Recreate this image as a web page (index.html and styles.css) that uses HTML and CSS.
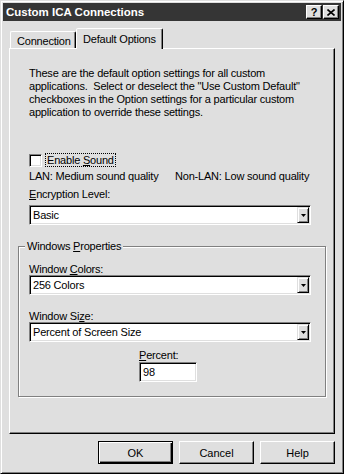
FILE: index.html
```html
<!DOCTYPE html>
<html lang="en">
<head>
    <meta charset="UTF-8">
    <title>Custom ICA Connections</title>
    <link rel="stylesheet" href="styles.css">
</head>
<body>
    <div class="window">
        <div class="titlebar">
            <span class="title">Custom ICA Connections</span>
            <div class="caption-buttons">
                <button class="caption-btn">?</button>
                <button class="caption-btn">
                    <svg width="8" height="7" viewBox="0 0 8 7"><path d="M0.5 0.5 L7.5 6.5 M7.5 0.5 L0.5 6.5" stroke="#000" stroke-width="1.6" fill="none"/></svg>
                </button>
            </div>
        </div>

        <div class="tabs">
            <div class="tab">Connection</div>
            <div class="tab active">Default Options</div>
        </div>

        <div class="panel">
            <div class="section">
                <p class="intro">These are the default option settings for all custom<br>applications.&nbsp; Select or deselect the "Use Custom Default"<br>checkboxes in the Option settings for a particular custom<br>application to override these settings.</p>

                <div class="check-row">
                    <span class="checkbox"></span>
                    <span class="focus-label">Enable <u>S</u>ound</span>
                </div>

                <div class="quality-row">
                    <span>LAN: Medium sound quality</span>
                    <span>Non-LAN: Low sound quality</span>
                </div>

                <div class="field-label enc-label"><u>E</u>ncryption Level:</div>
                <div class="combo">
                    <span class="combo-text">Basic</span>
                    <span class="combo-arrow"><svg width="5" height="3" viewBox="0 0 5 3"><path d="M0 0 H5 L2.5 3 Z" fill="#000"/></svg></span>
                </div>
            </div>

            <fieldset class="group">
                <legend>Windows <u>P</u>roperties</legend>

                <div class="field-label">Window <u>C</u>olors:</div>
                <div class="combo">
                    <span class="combo-text">256 Colors</span>
                    <span class="combo-arrow"><svg width="5" height="3" viewBox="0 0 5 3"><path d="M0 0 H5 L2.5 3 Z" fill="#000"/></svg></span>
                </div>

                <div class="field-label size-label">Window Si<u>z</u>e:</div>
                <div class="combo">
                    <span class="combo-text">Percent of Screen Size</span>
                    <span class="combo-arrow"><svg width="5" height="3" viewBox="0 0 5 3"><path d="M0 0 H5 L2.5 3 Z" fill="#000"/></svg></span>
                </div>

                <div class="percent">
                    <div class="field-label"><u>P</u>ercent:</div>
                    <div class="text-box">98</div>
                </div>
            </fieldset>
        </div>

        <div class="dialog-buttons">
            <button class="btn default">OK</button>
            <button class="btn">Cancel</button>
            <button class="btn">Help</button>
        </div>
    </div>
</body>
</html>
```

FILE: styles.css
```css
* {
    box-sizing: border-box;
}

body {
    margin: 0;
    background: #dfdfdf;
    font-family: "Liberation Sans", Arial, sans-serif;
    font-size: 11px;
    line-height: 13px;
    letter-spacing: -0.2px;
    color: #000;
}

.window {
    width: 344px;
    height: 474px;
    padding: 2px;
    border: 1px solid;
    border-color: #dfdfdf #000 #000 #dfdfdf;
    box-shadow: inset 1px 1px #fff, inset -1px -1px #808080;
    display: flex;
    flex-direction: column;
}

/* title bar */
.titlebar {
    height: 18px;
    background: #353535;
    display: flex;
    align-items: center;
    justify-content: space-between;
    padding: 0 2px 0 3px;
}

.title {
    color: #fff;
    font-weight: bold;
    font-size: 11.5px;
    letter-spacing: 0;
}

.caption-buttons {
    display: flex;
    gap: 1px;
}

.caption-btn {
    width: 16px;
    height: 14px;
    padding: 0;
    background: #dfdfdf;
    border: 1px solid;
    border-color: #fff #000 #000 #fff;
    box-shadow: inset -1px -1px #808080;
    font: bold 11px/12px "Liberation Sans", Arial, sans-serif;
    display: flex;
    align-items: center;
    justify-content: center;
}

/* tabs */
.tabs {
    display: flex;
    align-items: flex-end;
    height: 20px;
    margin: 7px 0 0 7px;
}

.tab {
    height: 17px;
    width: 66px;
    padding: 3px 0 0 6px;
    border: 1px solid;
    border-bottom: none;
    border-color: #fff #000 transparent #fff;
    box-shadow: inset -1px 0 #808080;
    border-radius: 2px 2px 0 0;
}

.tab.active {
    width: 87px;
    height: 21px;
    padding-top: 4px;
    margin-bottom: -1px;
    background: #dfdfdf;
    position: relative;
    z-index: 1;
}

/* page */
.panel {
    height: 386px;
    margin: 0 6px;
    padding: 18px 8px 0;
    border: 1px solid;
    border-color: #fff #000 #000 #fff;
    box-shadow: inset -1px -1px #808080;
}

.section {
    padding: 0 15px 0 11px;
}

.intro {
    margin: 0;
    white-space: nowrap;
}

.check-row {
    margin-top: 34px;
    height: 14px;
    display: flex;
    align-items: center;
}

.checkbox {
    width: 13px;
    height: 13px;
    background: #fff;
    border: 1px solid;
    border-color: #808080 #fff #fff #808080;
    box-shadow: inset 1px 1px #000, inset -1px -1px #dfdfdf;
}

.focus-label {
    margin-left: 3px;
    padding: 0 1px;
    line-height: 12px;
    border: 1px dotted #000;
}

.quality-row {
    margin-top: 3px;
    display: grid;
    grid-template-columns: 146px auto;
    white-space: nowrap;
}

.field-label {
    line-height: 12px;
}

.enc-label {
    margin-top: 5px;
    line-height: 13px;
    margin-bottom: 4px;
}

.size-label {
    margin-top: 15px;
}

.combo {
    height: 20px;
    padding: 1px;
    background: #fff;
    border: 1px solid;
    border-color: #808080 #fff #fff #808080;
    box-shadow: inset 1px 1px #000, inset -1px -1px #dfdfdf;
    display: flex;
}

.combo-text {
    flex: 1;
    padding-left: 2px;
    line-height: 16px;
}

.combo-arrow {
    width: 12px;
    background: #dfdfdf;
    border: 1px solid;
    border-color: #dfdfdf #000 #000 #dfdfdf;
    box-shadow: inset 1px 1px #fff, inset -1px -1px #808080;
    display: flex;
    align-items: center;
    justify-content: center;
}

/* group box */
.group {
    margin: 15px 0 0;
    padding: 10px 14px 14px 10px;
    min-width: 0;
    border: 1px solid #808080;
    box-shadow: inset 1px 1px #fff, 1px 1px #fff;
}

.group legend {
    padding: 0 2px;
    margin-left: -4px;
    background: #dfdfdf;
}

.percent {
    margin: 7px 0 0 110px;
}

.text-box {
    width: 58px;
    height: 20px;
    margin-top: 1px;
    padding: 2px 0 0 3px;
    line-height: 14px;
    background: #fff;
    border: 1px solid;
    border-color: #808080 #fff #fff #808080;
    box-shadow: inset 1px 1px #000, inset -1px -1px #dfdfdf;
}

/* bottom buttons */
.dialog-buttons {
    display: flex;
    justify-content: flex-end;
    gap: 6px;
    margin: 7px 6px 0 0;
}

.btn {
    width: 75px;
    height: 23px;
    padding: 0;
    background: #dfdfdf;
    border: 1px solid;
    border-color: #fff #000 #000 #fff;
    box-shadow: inset -1px -1px #808080;
    font: 11px "Liberation Sans", Arial, sans-serif;
    color: #000;
}

.btn.default {
    border-color: #000;
    box-shadow: inset 1px 1px #fff, inset -1px -1px #000, inset -2px -2px #808080;
}
```
